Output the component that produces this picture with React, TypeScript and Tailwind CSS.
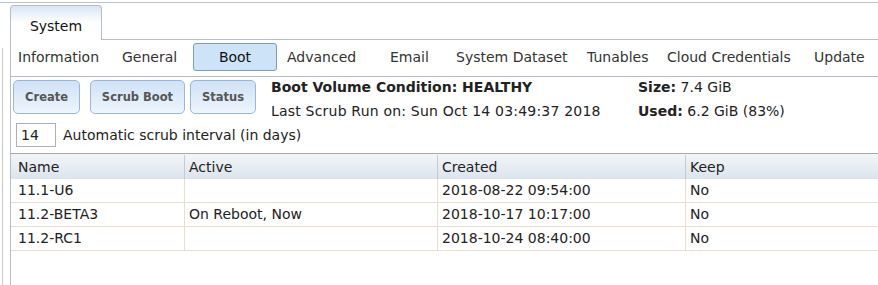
import React from 'react';

const subTabs = [
  { label: 'Information', x: 18 },
  { label: 'General', x: 122 },
  { label: 'Boot', x: 193, active: true },
  { label: 'Advanced', x: 287 },
  { label: 'Email', x: 390 },
  { label: 'System Dataset', x: 456 },
  { label: 'Tunables', x: 587 },
  { label: 'Cloud Credentials', x: 667 },
  { label: 'Update', x: 814 },
];

const rows = [
  { name: '11.1-U6', active: '', created: '2018-08-22 09:54:00', keep: 'No' },
  { name: '11.2-BETA3', active: 'On Reboot, Now', created: '2018-10-17 10:17:00', keep: 'No' },
  { name: '11.2-RC1', active: '', created: '2018-10-24 08:40:00', keep: 'No' },
];

function ActionButton({ label, w }: { label: string; w: string }) {
  return (
    <button
      className={`${w} h-[34px] pt-[2px] rounded-[5px] border border-[#9ab7d6] bg-gradient-to-b from-[#cfe2f6] to-[#eef5fd] text-[11.5px] font-bold text-[#555]`}
    >
      {label}
    </button>
  );
}

export default function App() {
  return (
    <div className="w-[878px] h-[285px] bg-white overflow-hidden text-[14px] text-[#222] font-['DejaVu_Sans',sans-serif]">
      <div className="h-[2px]" />
      <div className="h-px bg-[#bcc2cb]" />
      <div className="flex">
        <div className="w-[10px] shrink-0">
          <div className="mt-[45px] ml-[2px] h-[260px] w-px bg-[#c9c9c9]" />
        </div>
        <div className="flex-1">
          {/* main tab */}
          <div className="flex h-[37px] items-end">
            <div className="w-[92px] h-[35px] rounded-t-[4px] border border-b-0 border-[#b5bdc8] bg-gradient-to-b from-[#d9e6f5] via-white to-white flex items-center justify-center pt-[6px] text-[14px] text-[#111]">
              System
            </div>
            <div className="flex-1 border-b border-[#b5bdc8]" />
          </div>
          <div className="border-l border-[#b5bdc8] h-[250px]">
            {/* sub tabs */}
            <div className="relative h-[37px] border-b border-[#b5bdc8] text-[#333]">
              {subTabs.map((t) =>
                t.active ? (
                  <div
                    key={t.label}
                    className="absolute top-[3px] left-[182px] w-[84px] h-[28px] rounded-[3px] border border-[#7f9db9] bg-[#cde3f8] flex items-center justify-center text-[#111]"
                  >
                    {t.label}
                  </div>
                ) : (
                  <div
                    key={t.label}
                    className="absolute top-0 h-[34px] flex items-center whitespace-nowrap"
                    style={{ left: t.x - 11 }}
                  >
                    {t.label}
                  </div>
                )
              )}
            </div>
            {/* toolbar */}
            <div className="flex h-[46px]">
              <div className="flex pt-[3px] pl-[2px] gap-[10px]">
                <ActionButton label="Create" w="w-[67px]" />
                <div className="flex gap-[5px]">
                  <ActionButton label="Scrub Boot" w="w-[95px]" />
                  <ActionButton label="Status" w="w-[66px]" />
                </div>
              </div>
              <div className="ml-[15px] w-[367px] flex flex-col leading-[24px] -mt-[2px] tracking-[0.2px]">
                <div className="font-bold tracking-normal">Boot Volume Condition: HEALTHY</div>
                <div>Last Scrub Run on: Sun Oct 14 03:49:37 2018</div>
              </div>
              <div className="flex flex-col leading-[24px] -mt-[2px]">
                <div>
                  <span className="font-bold">Size:</span> 7.4 GiB
                </div>
                <div>
                  <span className="font-bold">Used:</span> 6.2 GiB (83%)
                </div>
              </div>
            </div>
            <div className="flex items-start h-[30px] pl-[5px]">
              <div className="w-[40px] h-[24px] border border-[#b0b0b0] pl-[4px] flex items-center">14</div>
              <span className="ml-[7px] leading-[24px]">Automatic scrub interval (in days)</span>
            </div>
            {/* grid */}
            <div className="border-t border-[#a9a9a9]">
              <div className="flex h-[25px] pt-[1px] bg-gradient-to-b from-[#f3f5f8] to-[#dbe4ee] text-[#222]">
                <div className="w-[173px] pl-[7px] flex items-center">Name</div>
                <div className="w-[253px] pl-[4px] flex items-center border-l border-[#c6cbd1]">Active</div>
                <div className="w-[248px] pl-[4px] flex items-center border-l border-[#c6cbd1]">Created</div>
                <div className="flex-1 pl-[4px] flex items-center border-l border-[#c6cbd1]">Keep</div>
              </div>
              {rows.map((r) => (
                <div key={r.name} className="flex h-[24px] border-b border-[#ecdccb]">
                  <div className="w-[173px] pl-[7px] flex items-center">{r.name}</div>
                  <div className="w-[253px] pl-[4px] flex items-center border-l border-[#ecdccb]">{r.active}</div>
                  <div className="w-[248px] pl-[4px] flex items-center border-l border-[#ecdccb]">{r.created}</div>
                  <div className="flex-1 pl-[4px] flex items-center border-l border-[#ecdccb]">{r.keep}</div>
                </div>
              ))}
            </div>
          </div>
        </div>
      </div>
    </div>
  );
}
